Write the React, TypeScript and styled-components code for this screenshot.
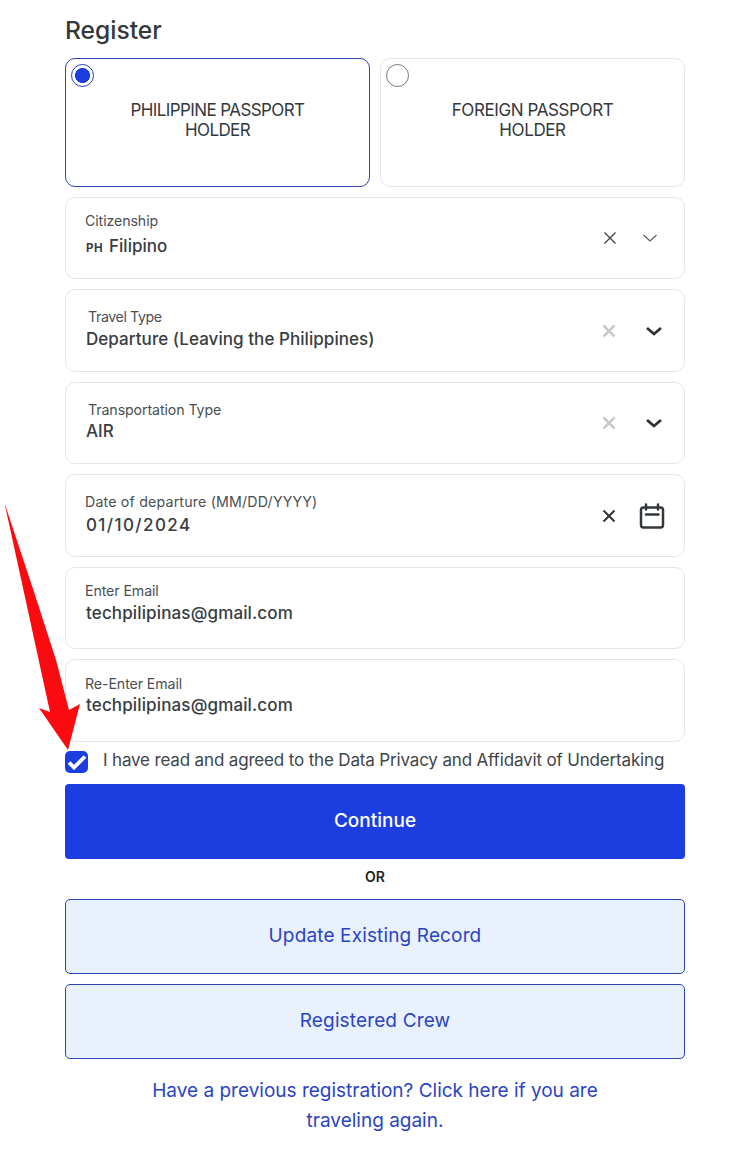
import React from "react";
import styled, { createGlobalStyle } from "styled-components";

const GlobalStyle = createGlobalStyle`
  html, body {
    margin: 0;
    padding: 0;
    background: #fff;
  }
  * {
    box-sizing: border-box;
  }
`;

const Page = styled.div`
  position: relative;
  width: 750px;
  height: 1153px;
  overflow: hidden;
  padding: 15px 65px 0;
  font-family: Inter, "Liberation Sans", sans-serif;
  color: #333a41;
`;

const Title = styled.h1`
  margin: 0 0 12px;
  font-size: 24.6px;
  line-height: 31px;
  font-weight: 500;
  color: #33383d;
`;

const CardRow = styled.div`
  display: grid;
  grid-template-columns: 305px 305px;
  gap: 10px;
  margin-bottom: 10px;
`;

const Card = styled.div<{ $active?: boolean }>`
  position: relative;
  height: 129px;
  padding: 41px 40px 0;
  border: 1px solid ${(p) => (p.$active ? "#2a44b4" : "#e6e6e6")};
  border-radius: 10px;
  text-align: center;
  font-size: 17px;
  line-height: 20px;
  letter-spacing: ${(p) => (p.$active ? "-0.6px" : "-0.4px")};
  color: #33383d;
`;

const Radio = styled.span<{ $active?: boolean }>`
  position: absolute;
  top: 5px;
  left: 5px;
  width: 23px;
  height: 23px;
  border-radius: 50%;
  border: ${(p) => (p.$active ? "1.5px solid #1c3de0" : "1px solid #777")};
  background: ${(p) => (p.$active ? "radial-gradient(circle, #1c3de0 0 7.2px, #fff 7.8px)" : "#fff")};
`;

const Field = styled.div<{ $height?: number }>`
  display: flex;
  align-items: center;
  justify-content: space-between;
  height: ${(p) => p.$height ?? 82}px;
  margin-bottom: 10px;
  padding-left: 19px;
  border: 1px solid #e6e6e6;
  border-radius: 10px;
`;

const FieldText = styled.div<{ $top: number; $gap: number }>`
  display: flex;
  flex-direction: column;
  align-self: flex-start;
  gap: ${(p) => p.$gap}px;
  padding-top: ${(p) => p.$top}px;
`;

const Label = styled.span<{ $indent?: number; $tracking?: number }>`
  margin-left: ${(p) => p.$indent ?? 0}px;
  font-size: 14.2px;
  line-height: 18px;
  letter-spacing: ${(p) => p.$tracking ?? -0.1}px;
  color: #4a4f55;
`;

const Value = styled.span<{ $tracking?: number }>`
  margin-left: 1px;
  font-size: 17px;
  line-height: 22px;
  font-weight: 500;
  letter-spacing: ${(p) => p.$tracking ?? 0}px;
  color: #383d42;
`;

const Code = styled.span`
  margin-right: 6px;
  font-size: 11.5px;
  font-weight: 700;
  letter-spacing: 0.5px;
`;

const Icons = styled.div<{ $right: number }>`
  display: flex;
  align-items: center;
  margin-right: ${(p) => p.$right}px;
`;

const IconSlot = styled.span<{ $width: number }>`
  display: flex;
  align-items: center;
  justify-content: center;
  width: ${(p) => p.$width}px;
`;

const AgreeRow = styled.label`
  display: flex;
  align-items: center;
  height: 24px;
  margin: -2px 0 10px;
  font-size: 17px;
  line-height: 20px;
  letter-spacing: -0.16px;
  white-space: nowrap;
  color: #40454a;
`;

const AgreeText = styled.span`
  margin-top: -4px;
`;

const Check = styled.span`
  display: flex;
  align-items: center;
  justify-content: center;
  width: 23px;
  height: 22px;
  margin-right: 15px;
  border-radius: 5px;
  background: #1c3de0;
`;

const PrimaryButton = styled.button`
  display: block;
  width: 100%;
  height: 75px;
  padding: 0 0 2px;
  border: none;
  border-radius: 4px;
  background: #1c3de0;
  color: #fff;
  font: 500 19px Inter, sans-serif;
`;

const OrText = styled.div`
  margin: 8px 0 13px;
  text-align: center;
  font-size: 14px;
  line-height: 19px;
  font-weight: 600;
  color: #222;
`;

const OutlineButton = styled.button`
  display: block;
  width: 100%;
  height: 75px;
  margin-bottom: 10px;
  padding: 0 0 2px;
  border: 1px solid #2a44b4;
  border-radius: 5px;
  background: #e9f1fd;
  color: #2a44c4;
  font: 400 19px Inter, sans-serif;
  letter-spacing: 0.14px;
`;

const PreviousLink = styled.p`
  width: 470px;
  margin: 17px auto 0;
  text-align: center;
  font-size: 19px;
  line-height: 30px;
  color: #2a44c4;
`;

const Arrow = styled.svg`
  position: absolute;
  left: 0;
  top: 495px;
`;

const Cross = ({ color, weight = 1.6 }: { color: string; weight?: number }) => (
  <svg width="14" height="14" viewBox="0 0 14 14" fill="none" stroke={color} strokeWidth={weight}>
    <path d="M1.5 1.5l11 11M12.5 1.5l-11 11" />
  </svg>
);

const Chevron = ({ bold }: { bold?: boolean }) => (
  <svg width="18" height="10" viewBox="0 0 18 10" fill="none" stroke={bold ? "#2f3338" : "#555"} strokeWidth={bold ? 2.8 : 1.1}>
    <path d={bold ? "M2 2l7 6 7-6" : "M2.5 2l6.500 6 6.500-6"} />
  </svg>
);

const CalendarIcon = () => (
  <svg width="26" height="26" viewBox="0 0 26 26" fill="none" stroke="#33383d" strokeWidth="2.5" strokeLinecap="round">
    <rect x="2" y="4.500" width="22" height="20" rx="2.500" />
    <path d="M7 11.500h12.500M7 1.500v5M19 1.500v5" />
  </svg>
);

export default function App() {
  return (
    <Page>
      <GlobalStyle />
      <Title>Register</Title>
      <CardRow>
        <Card $active>
          <Radio $active />
          PHILIPPINE PASSPORT
          <br />
          HOLDER
        </Card>
        <Card>
          <Radio />
          FOREIGN PASSPORT
          <br />
          HOLDER
        </Card>
      </CardRow>

      <Field>
        <FieldText $top={14} $gap={5}>
          <Label>Citizenship</Label>
          <Value>
            <Code>PH</Code>Filipino
          </Value>
        </FieldText>
        <Icons $right={14}>
          <IconSlot $width={40}>
            <Cross color="#444" weight={1.4} />
          </IconSlot>
          <IconSlot $width={40}>
            <Chevron />
          </IconSlot>
        </Icons>
      </Field>

      <Field $height={83}>
        <FieldText $top={18} $gap={2}>
          <Label $indent={3} $tracking={-0.4}>Travel Type</Label>
          <Value $tracking={0.06}>Departure (Leaving the Philippines)</Value>
        </FieldText>
        <Icons $right={5}>
          <IconSlot $width={40}>
            <Cross color="#c9c9c9" weight={2.6} />
          </IconSlot>
          <IconSlot $width={50}>
            <Chevron bold />
          </IconSlot>
        </Icons>
      </Field>

      <Field>
        <FieldText $top={18} $gap={1}>
          <Label $indent={3}>Transportation Type</Label>
          <Value>AIR</Value>
        </FieldText>
        <Icons $right={5}>
          <IconSlot $width={40}>
            <Cross color="#c9c9c9" weight={2.6} />
          </IconSlot>
          <IconSlot $width={50}>
            <Chevron bold />
          </IconSlot>
        </Icons>
      </Field>

      <Field $height={83}>
        <FieldText $top={18} $gap={3}>
          <Label $tracking={0.18}>Date of departure (MM/DD/YYYY)</Label>
          <Value $tracking={1.4}>01/10/2024</Value>
        </FieldText>
        <Icons $right={9}>
          <IconSlot $width={40}>
            <Cross color="#2f3338" weight={2} />
          </IconSlot>
          <IconSlot $width={46}>
            <CalendarIcon />
          </IconSlot>
        </Icons>
      </Field>

      <Field>
        <FieldText $top={14} $gap={2}>
          <Label>Enter Email</Label>
          <Value $tracking={0.14}>techpilipinas@gmail.com</Value>
        </FieldText>
      </Field>

      <Field $height={83}>
        <FieldText $top={15} $gap={1}>
          <Label>Re-Enter Email</Label>
          <Value $tracking={0.14}>techpilipinas@gmail.com</Value>
        </FieldText>
      </Field>

      <AgreeRow>
        <Check>
          <svg width="20" height="16" viewBox="0 0 20 16" fill="none" stroke="#fff" strokeWidth="3.8">
            <path d="M2 8.500l5 5L18 2.500" />
          </svg>
        </Check>
        <AgreeText>I have read and agreed to the Data Privacy and Affidavit of Undertaking</AgreeText>
      </AgreeRow>

      <PrimaryButton>Continue</PrimaryButton>
      <OrText>OR</OrText>
      <OutlineButton>Update Existing Record</OutlineButton>
      <OutlineButton>Registered Crew</OutlineButton>
      <PreviousLink>Have a previous registration? Click here if you are traveling again.</PreviousLink>

      <Arrow width="90" height="260" viewBox="0 0 90 260">
        <path d="M4.500 8L35 100L56 165L69 215L80 209L68 255L39 213L50 217Z" fill="#fb0a0f" />
      </Arrow>
    </Page>
  );
}
